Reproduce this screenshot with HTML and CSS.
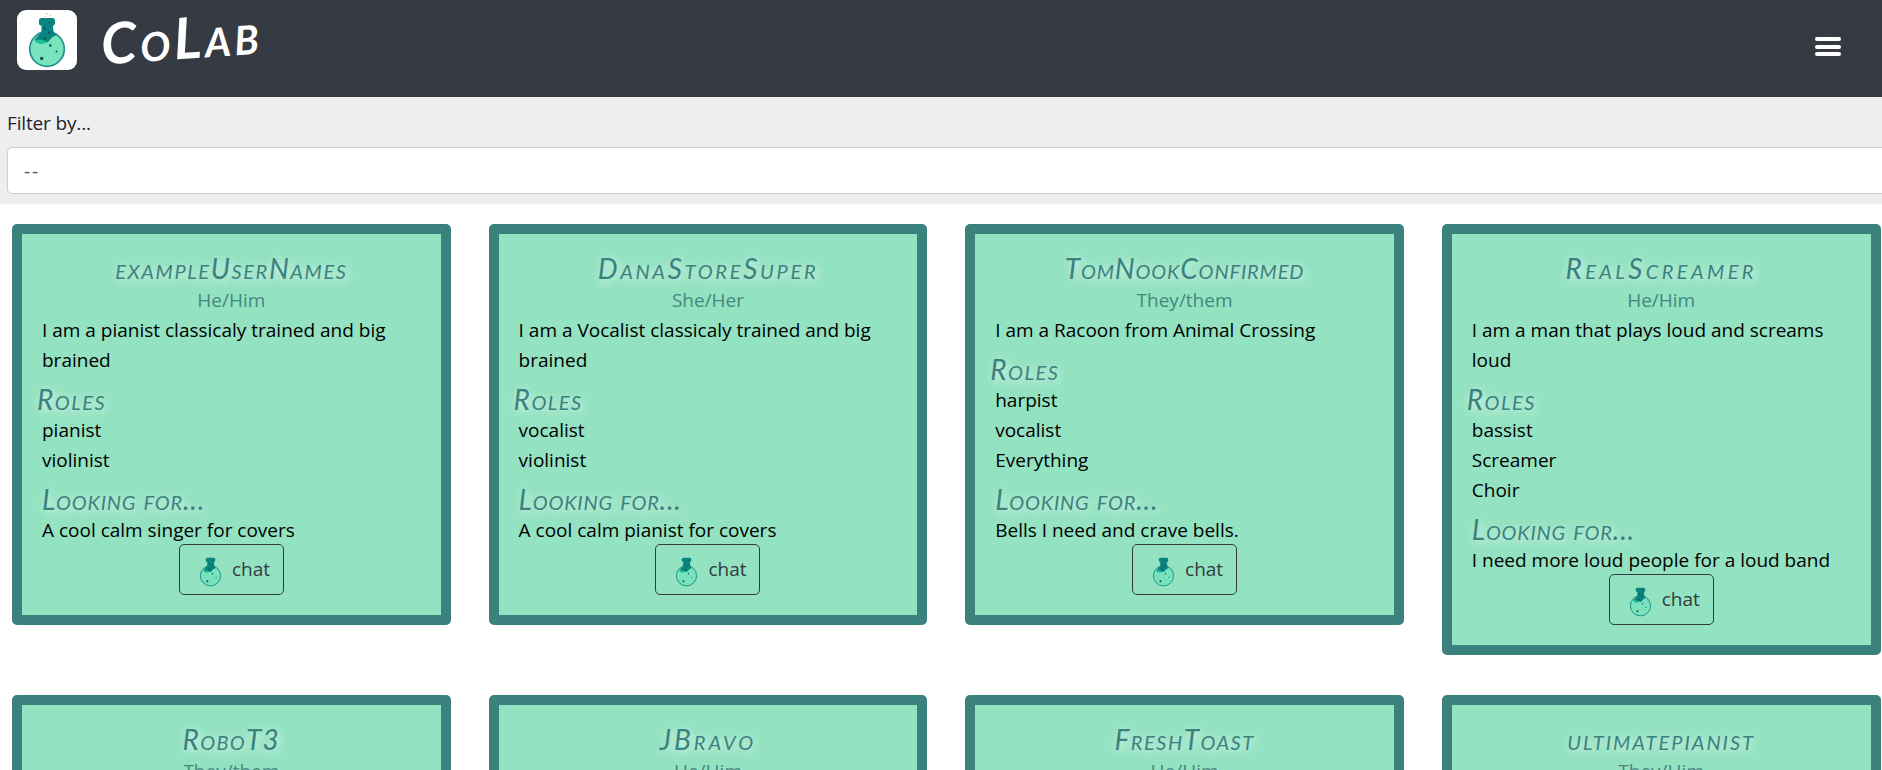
FILE: index.html
```html
<!DOCTYPE html>
<html lang="en">
<head>
<meta charset="utf-8">
<title>CoLab</title>
<link rel="stylesheet" href="styles.css">
</head>
<body>
<svg class="sprite" aria-hidden="true">
  <symbol id="flask" viewBox="0 0 60 60">
    <circle cx="30" cy="39" r="17.3" fill="#79e3bd" stroke="#218f8b" stroke-width="1.7"/>
    <path d="M24.500 15h11.500c0 5 .5 8 3 10.500-4 1-5.500 4-8 6.500-3.500 2-8-2-13.500-2 3-4 7-6.500 7-10z" fill="#08857f"/>
    <path d="M17.500 30.500c4-2.500 8 .5 12 .5-1 4-10 4-12-.5z" fill="#20bf99"/>
    <rect x="22" y="8" width="16" height="7.500" rx="2.600" fill="#08857f"/>
    <g fill="#1b4748"><circle cx="33.300" cy="35.500" r="1.200"/><circle cx="39.500" cy="41.500" r=".9"/><circle cx="24.700" cy="48.500" r="1.700"/><circle cx="27.700" cy="28.500" r="1.300"/><circle cx="32" cy="22.500" r="1.100"/><circle cx="27.500" cy="18.500" r="1"/><circle cx="33" cy="12.300" r=".9"/></g>
    <g fill="#b5bcbc"><circle cx="30" cy="4" r=".8"/><circle cx="33.500" cy="5.500" r=".7"/><circle cx="28" cy="6.500" r=".7"/></g>
  </symbol>
</svg>
<header class="topbar">
  <div class="brand">
    <span class="logo"><svg><use href="#flask"/></svg></span>
    <h1 class="brand-name">CoLab</h1>
  </div>
  <button class="menu" aria-label="Menu"><span></span><span></span><span></span></button>
</header>
<section class="filter">
  <label class="filter-label" for="filter">Filter by...</label>
  <div class="filter-input" id="filter">--</div>
</section>
<main class="grid">
  <article class="card">
    <h2 class="name name-example">exampleUserNames</h2><p class="pronouns">He/Him</p>
    <p>I am a pianist classicaly trained and big brained</p>
    <h3 class="heading roles">Roles</h3><p>pianist</p><p>violinist</p>
    <h3 class="heading looking">Looking for...</h3><p>A cool calm singer for covers</p>
    <button class="chat"><svg><use href="#flask"/></svg>chat</button>
  </article>
  <article class="card">
    <h2 class="name name-dana">DanaStoreSuper</h2><p class="pronouns">She/Her</p>
    <p>I am a Vocalist classicaly trained and big brained</p>
    <h3 class="heading roles">Roles</h3><p>vocalist</p><p>violinist</p>
    <h3 class="heading looking">Looking for...</h3><p>A cool calm pianist for covers</p>
    <button class="chat"><svg><use href="#flask"/></svg>chat</button>
  </article>
  <article class="card">
    <h2 class="name name-tom">TomNookConfirmed</h2><p class="pronouns">They/them</p>
    <p>I am a Racoon from Animal Crossing</p>
    <h3 class="heading roles">Roles</h3><p>harpist</p><p>vocalist</p><p>Everything</p>
    <h3 class="heading looking">Looking for...</h3><p>Bells I need and crave bells.</p>
    <button class="chat"><svg><use href="#flask"/></svg>chat</button>
  </article>
  <article class="card">
    <h2 class="name name-real">RealScreamer</h2><p class="pronouns">He/Him</p>
    <p>I am a man that plays loud and screams loud</p>
    <h3 class="heading roles">Roles</h3><p>bassist</p><p>Screamer</p><p>Choir</p>
    <h3 class="heading looking">Looking for...</h3><p>I need more loud people for a loud band</p>
    <button class="chat"><svg><use href="#flask"/></svg>chat</button>
  </article>
  <article class="card"><h2 class="name name-robot">RoboT3</h2><p class="pronouns">They/them</p></article>
  <article class="card"><h2 class="name name-bravo">JBravo</h2><p class="pronouns">He/Him</p></article>
  <article class="card"><h2 class="name name-toast">FreshToast</h2><p class="pronouns">He/Him</p></article>
  <article class="card"><h2 class="name name-ultimate">ultimatepianist</h2><p class="pronouns">They/Him</p></article>
</main>
</body>
</html>
```
FILE: styles.css
```css
* { box-sizing: border-box; }
body {
  margin: 0;
  height: 770px;
  overflow: hidden;
  background: #fff;
  color: #000;
  font: 19px/30px "Open Sans", "Noto Sans", sans-serif;
}
h1, h2, h3, p { margin: 0; }
.sprite { display: none; }
.topbar {
  display: flex;
  justify-content: space-between;
  height: 97px;
  padding: 10px 41px 0 17px;
  background: #363a42;
}
.brand { display: flex; gap: 25px; }
.logo {
  width: 60px;
  height: 60px;
  border-radius: 9px;
  background: #fff;
}
.logo svg { display: block; width: 60px; height: 60px; }
.brand-name {
  color: #fff;
  font: italic 700 57px/54px Lato, sans-serif;
  font-variant: small-caps;
  letter-spacing: 3.500px;
  transform: rotate(-4deg);
}
.menu {
  display: flex;
  flex-direction: column;
  gap: 3.500px;
  width: 26px;
  margin-top: 27px;
  padding: 0;
  border: 0;
  background: none;
}
.menu span { width: 26px; height: 4px; border-radius: 2px; background: #fff; }
.filter { height: 107px; padding: 11px 0 0 7px; background: #eee; }
.filter-label { display: block; height: 39px; color: #212529; letter-spacing: -.15px; }
.filter-input {
  height: 47px;
  padding: 8px 16px;
  border: 1px solid #cfcfd1;
  border-right: 0;
  border-radius: 5px 0 0 5px;
  background: #fff;
  color: #495057;
  letter-spacing: 2px;
}
.grid {
  display: grid;
  grid-template-columns: repeat(4, 438.750px);
  column-gap: 37.850px;
  row-gap: 40px;
  align-items: start;
  padding: 20px 0 0 12px;
}
.card {
  display: flex;
  flex-direction: column;
  padding: 20px;
  border: 10px solid #3b827f;
  border-radius: 5px;
  background: #93e2c1;
}
.name, .heading {
  color: #3b827f;
  font: italic 400 28px/28px Lato, sans-serif;
  font-variant: small-caps;
  text-shadow: 2px 2px 10px #effff8;
  white-space: nowrap;
}
.name { height: 31px; text-align: center; }
.name-example { letter-spacing: 1.600px; }
.name-dana { letter-spacing: 2.700px; }
.name-tom { letter-spacing: .850px; }
.name-real { letter-spacing: 3.400px; }
.name-robot { letter-spacing: 1.300px; }
.name-bravo { letter-spacing: 3px; }
.name-toast { letter-spacing: 1.500px; }
.name-ultimate { letter-spacing: 2px; }
.heading { height: 30px; margin-top: 10px; }
.roles { margin-left: -5px; letter-spacing: 1.500px; }
.looking { letter-spacing: .8px; }
.pronouns { color: #46877f; text-align: center; }
.chat {
  display: flex;
  align-items: center;
  align-self: center;
  gap: 4px;
  width: 105px;
  height: 51px;
  margin-top: -1px;
  padding: 0 0 2px 13px;
  border: 1px solid #343a40;
  border-radius: 5px;
  background: none;
  color: #343a40;
  font: inherit;
}
.chat svg { width: 35px; height: 35px; margin-top: 3px; }
```
